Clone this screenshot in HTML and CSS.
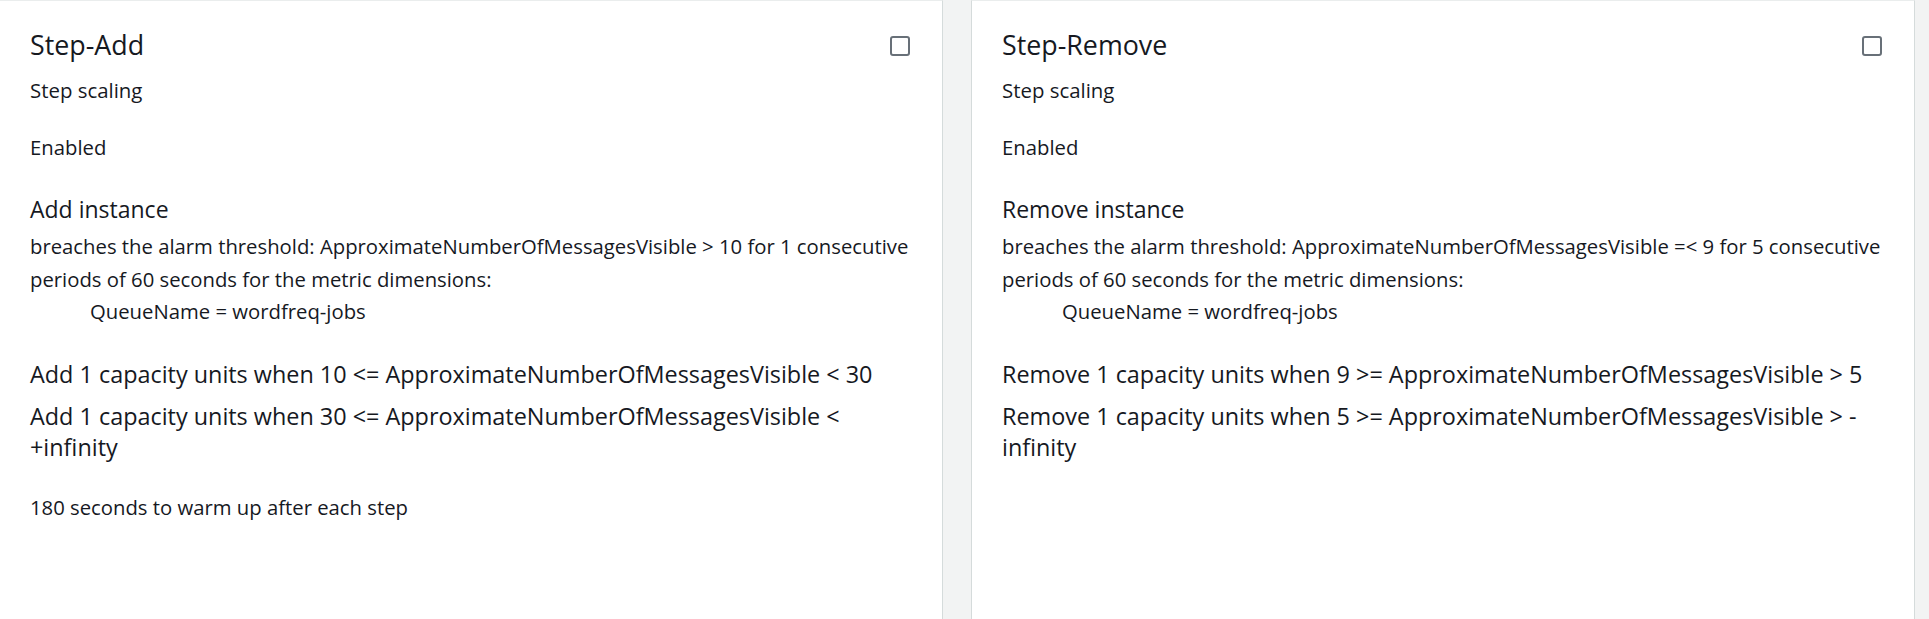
FILE: index.html
```html
<!DOCTYPE html>
<html lang="en">
<head>
<meta charset="utf-8">
<title>Scaling policies</title>
<link rel="stylesheet" href="styles.css">
</head>
<body>
<div class="cards">
  <section class="card">
    <div class="card-head">
      <h2 class="card-title">Step-Add</h2>
      <span class="checkbox" role="checkbox" aria-checked="false"></span>
    </div>
    <p class="type">Step scaling</p>
    <p class="status">Enabled</p>
    <h3 class="alarm-title">Add instance</h3>
    <div class="alarm-desc">
      <p>breaches the alarm threshold: ApproximateNumberOfMessagesVisible &gt; 10 for 1 consecutive periods of 60 seconds for the metric dimensions:</p>
      <p class="dimension">QueueName = wordfreq-jobs</p>
    </div>
    <ul class="steps">
      <li>Add 1 capacity units when 10 &lt;= ApproximateNumberOfMessagesVisible &lt; 30</li>
      <li>Add 1 capacity units when 30 &lt;= ApproximateNumberOfMessagesVisible &lt; +infinity</li>
    </ul>
    <p class="warmup">180 seconds to warm up after each step</p>
  </section>
  <section class="card">
    <div class="card-head">
      <h2 class="card-title">Step-Remove</h2>
      <span class="checkbox" role="checkbox" aria-checked="false"></span>
    </div>
    <p class="type">Step scaling</p>
    <p class="status">Enabled</p>
    <h3 class="alarm-title">Remove instance</h3>
    <div class="alarm-desc">
      <p>breaches the alarm threshold: ApproximateNumberOfMessagesVisible =&lt; 9 for 5 consecutive periods of 60 seconds for the metric dimensions:</p>
      <p class="dimension">QueueName = wordfreq-jobs</p>
    </div>
    <ul class="steps">
      <li>Remove 1 capacity units when 9 &gt;= ApproximateNumberOfMessagesVisible &gt; 5</li>
      <li>Remove 1 capacity units when 5 &gt;= ApproximateNumberOfMessagesVisible &gt; -infinity</li>
    </ul>
  </section>
</div>
</body>
</html>
```

FILE: styles.css
```css
* {
  box-sizing: border-box;
}

html,
body {
  margin: 0;
  height: 100%;
  overflow: hidden;
}

body {
  background: #f2f3f3;
  font-family: "Open Sans", "Noto Sans", sans-serif;
  color: #16191f;
}

.cards {
  display: flex;
  gap: 28px;
  margin-left: -1px;
  height: calc(100% + 40px);
}

.card {
  flex: none;
  width: 944px;
  background: #ffffff;
  border: 1px solid #d5dbdb;
  border-top-color: #eaeded;
  border-bottom: none;
  padding: 28px 28px 0 30px;
}

.card-head {
  display: flex;
  justify-content: space-between;
  align-items: flex-start;
}

.card-title {
  margin: 0;
  font-size: 26.8px;
  line-height: 32px;
  font-weight: 400;
}

.checkbox {
  flex: none;
  width: 20px;
  height: 20px;
  border: 2px solid #687078;
  border-radius: 3px;
  background: #ffffff;
  margin: 7px 4px 0 0;
}

.type {
  margin: 14px 0 0;
  font-size: 20.4px;
  line-height: 31.5px;
}

.status {
  margin: 25px 0 0;
  font-size: 20.3px;
  line-height: 31.5px;
}

.alarm-title {
  margin: 30.6px 0 0;
  font-size: 23px;
  line-height: 31.5px;
  font-weight: 400;
}

.alarm-desc {
  margin-top: 5.4px;
  font-size: 20.3px;
  line-height: 32.4px;
}

.alarm-desc p {
  margin: 0;
}

.alarm-desc .dimension {
  padding-left: 60px;
}

.steps {
  list-style: none;
  margin: 31.2px 0 0;
  padding: 0;
  font-size: 23.4px;
  line-height: 31px;
}

.steps li + li {
  margin-top: 10.7px;
}

.warmup {
  margin: 29.3px 0 0;
  font-size: 20.3px;
  line-height: 31.5px;
}
```
